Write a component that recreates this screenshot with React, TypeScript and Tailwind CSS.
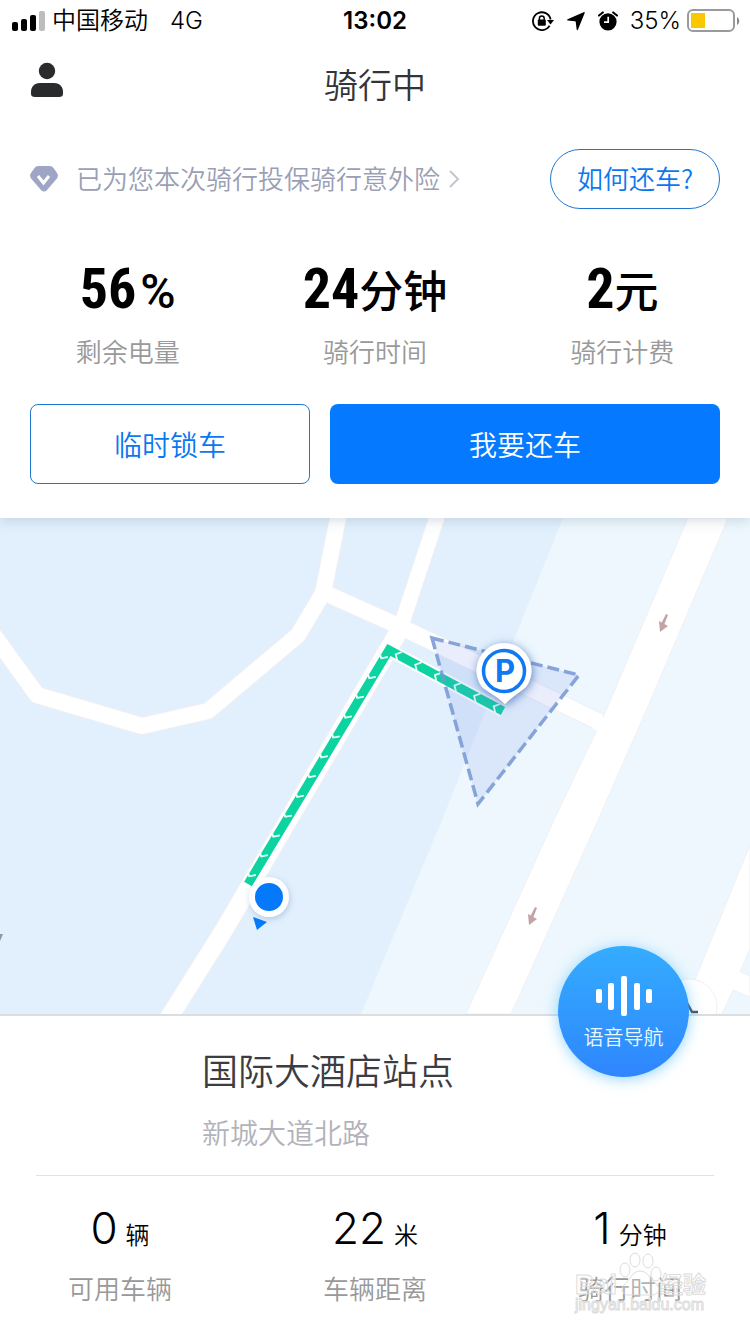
import React from "react";

const ROUTE_MARKS = [
  { from: [250, 875], to: [382, 657], count: 12, angle: 121 },
  { from: [397, 655], to: [495, 707], count: 6, angle: 208 },
];

function StatusBar() {
  return (
    <div className="grid grid-cols-3 items-center h-[42px] px-3 text-2xl text-black">
      <div className="flex items-center gap-1.5 whitespace-nowrap font-[350]">
        <svg className="w-[34px] h-5" viewBox="0 0 34 20" aria-hidden="true">
          <rect x="0" y="11" width="6" height="9" rx="2" />
          <rect x="9" y="8" width="6" height="12" rx="2" />
          <rect x="18" y="4" width="6" height="16" rx="2" />
          <rect x="27" y="0" width="6" height="20" rx="2" fill="#bdbdbd" />
        </svg>
        <span>中国移动</span>
        <span className="ml-4">4G</span>
      </div>
      <span className="text-center font-semibold">13:02</span>
      <div className="flex items-center justify-end -mr-0.5 whitespace-nowrap">
        <svg className="w-[22px] h-5 mr-3 shrink-0" viewBox="0 0 22 20" aria-hidden="true">
          <path d="M17.6 14.6A8.9 8.9 0 1 1 18.6 8.5" fill="none" stroke="#000" strokeWidth="1.8" />
          <path d="M15 9h7l-3.5 4.4z" />
          <rect x="5.8" y="8.6" width="8" height="6.2" rx="1" />
          <path d="M7.4 9V7.4a2.4 2.4 0 0 1 4.8 0V9" fill="none" stroke="#000" strokeWidth="1.5" />
        </svg>
        <svg className="w-5 h-5 mr-3 shrink-0" viewBox="0 0 20 20" aria-hidden="true">
          <path d="M17.6 1.200Q19.200 .6 18.600 2.200L12 18.500Q11.200 20 10.600 18.300L9.800 11.200Q9.700 10.400 9 10.300L1.800 9.500Q.2 9 1.600 8.200z" />
        </svg>
        <svg className="w-5 h-5 mr-3 shrink-0" viewBox="0 0 20 20" aria-hidden="true">
          <circle cx="10" cy="10.8" r="8.6" />
          <path d="M1 4.6 4.8 1.4M19 4.6 15.2 1.4" stroke="#000" strokeWidth="2" strokeLinecap="round" />
          <path d="M10.2 5.8v5.4H6" fill="none" stroke="#fff" strokeWidth="1.7" />
        </svg>
        <span className="mr-1.5 font-[350]">35%</span>
        <svg className="w-[53px] h-6 shrink-0" viewBox="0 0 53 24" aria-hidden="true">
          <rect x="1" y="1" width="46" height="21" rx="5" fill="#fff" stroke="#9a9a9a" strokeWidth="2" />
          <rect x="4" y="4" width="14" height="15" fill="#fac800" />
          <path d="M50 8c3 1.6 3 6.4 0 8z" fill="#8a8a8a" />
        </svg>
      </div>
    </div>
  );
}

function RideStat({ value, unit, label }: { value: string; unit: string; label: string }) {
  const unitClass =
    unit === "%"
      ? "ml-1 text-5xl leading-16 font-medium font-[Roboto,sans-serif]"
      : "text-[44px] font-['Noto_Sans_CJK_SC',sans-serif]";
  return (
    <div className="flex flex-col items-center">
      <p className="flex items-baseline h-16 leading-16 font-medium text-black">
        <span className="text-[56px] font-bold font-['Roboto_Condensed','Liberation_Sans_Narrow',Roboto,sans-serif]">{value}</span>
        <span className={unitClass}>{unit}</span>
      </p>
      <p className="mt-3 text-[26px] leading-10 font-[350] text-[#999999]">{label}</p>
    </div>
  );
}

function SiteStat({ value, unit, label }: { value: string; unit: string; label: string }) {
  return (
    <div className="flex flex-col items-center">
      <p className="flex items-baseline gap-2 leading-14 text-black">
        <span className="text-[44px] font-[350]">{value}</span>
        <span className="text-2xl leading-14 font-[350]">{unit}</span>
      </p>
      <p className="mt-1.5 text-[26px] leading-10 font-[350] text-[#999999]">{label}</p>
    </div>
  );
}

function RideMap() {
  return (
    <svg
      className="absolute inset-0 w-full h-full"
      viewBox="0 518 750 496"
      preserveAspectRatio="xMidYMid slice"
      role="img"
      aria-label="骑行路线"
    >
      <defs>
        <filter id="soft" x="-50%" y="-50%" width="200%" height="200%">
          <feDropShadow dx="1" dy="2" stdDeviation="5" floodColor="#3f6eb5" floodOpacity="0.8" />
        </filter>
        <filter id="faint" x="-50%" y="-50%" width="200%" height="200%">
          <feDropShadow dx="1" dy="2" stdDeviation="3" floodColor="#5b7ba8" floodOpacity="0.35" />
        </filter>
      </defs>
      <rect y="518" width="750" height="496" fill="#e2f0fd" />
      <path d="M563 518 515 637 442 820 361 1014H750V518z" fill="#edf7fd" />
      <g fill="none" strokeLinejoin="round">
        {[
          { stroke: "#efeff4", extra: 2 },
          { stroke: "#ffffff", extra: 0 },
        ].map((layer) => (
          <g key={layer.stroke} stroke={layer.stroke}>
            <path strokeWidth={16 + layer.extra} d="M-20 616 0 644 37 695 142 726 208 711 298 635 323 593 340 508" />
            <path strokeWidth={16 + layer.extra} d="M325 593 403 628 604 724" />
            <path strokeWidth={15 + layer.extra} d="M440 508 402 623" />
            <path strokeWidth={18 + layer.extra} d="M402 626 224 930 165 1024" />
          </g>
        ))}
      </g>
      <path d="M688 518 605 713 554 820 466 1014H511L598 820 645 713 728 518z" fill="#fff" stroke="#f1f1f5" />
      <path d="M600 716 612 722 604 734 592 728z" fill="#fff" />
      <path d="M750 845 695 980 684 1014H722L733 990 750 997V976L740 972 750 948z" fill="#fff" stroke="#f1f1f5" />
      <circle cx="689" cy="1007" r="28" fill="#fff" stroke="#f0f0f3" />
      <path d="M686 1001 692 1012H698" fill="none" stroke="#4b565e" strokeWidth="2.5" />
      <path d="M0 934 3 934 0 941z" fill="#8d979e" />
      {[
        [663, 623],
        [532, 916],
      ].map(([x, y]) => (
        <g key={x} transform={`translate(${x} ${y})`} fill="#c4a3a6">
          <path d="M3-9 5-8 1 2-2 1z" />
          <path d="M-4-2 5 3-3 9z" />
        </g>
      ))}
      <path d="M248 884 389 650 503 711" fill="none" stroke="#fff" strokeWidth="13" />
      <path d="M248 884 389 650 503 711" fill="none" stroke="#0cd3a0" strokeWidth="9" />
      {ROUTE_MARKS.map((run) =>
        Array.from({ length: run.count }, (_, i) => {
          const t = i / (run.count - 1);
          const x = run.from[0] + (run.to[0] - run.from[0]) * t;
          const y = run.from[1] + (run.to[1] - run.from[1]) * t;
          return (
            <path
              key={`${run.angle}-${i}`}
              transform={`translate(${x} ${y}) rotate(${run.angle})`}
              d="M-3-5 1.5 0-3 5"
              fill="none"
              stroke="#e8fff8"
              strokeWidth="1.8"
            />
          );
        }),
      )}
      <path
        d="M432 638 579 675 478 804z"
        fill="#7287e6"
        fillOpacity="0.15"
        stroke="#7596d2"
        strokeOpacity="0.85"
        strokeWidth="3.5"
        strokeDasharray="12 5"
      />
      <path
        filter="url(#soft)"
        d="M505 704C498 697 488 692 482 687A27.5 27.5 0 1 1 526 687C520 692 512 697 505 704z"
        fill="#fff"
      />
      <circle cx="504" cy="671" r="20.5" fill="#fff" stroke="#1078f0" strokeWidth="3.5" />
      <text x="505" y="682" textAnchor="middle" fontSize="31" fontWeight="700" fill="#1078f0" className="font-['Inter',sans-serif]">
        P
      </text>
      <g filter="url(#faint)">
        <circle cx="269" cy="897" r="20" fill="#fff" />
      </g>
      <circle cx="269" cy="897" r="14" fill="#0679fb" />
      <path d="M253 917 267 922 257 930z" fill="#0679fb" />
    </svg>
  );
}

function Watermark() {
  return (
    <svg className="absolute right-10 bottom-4 w-[136px] h-[66px] pointer-events-none" viewBox="0 0 136 66" aria-hidden="true">
      <g fill="#fff" fillOpacity="0.25" stroke="#dcdcdc" strokeWidth="1">
        <text x="1" y="42" fontSize="27" fontWeight="700" className="font-['Liberation_Sans',sans-serif]">Bai</text>
        <ellipse cx="51" cy="18" rx="5" ry="7" />
        <ellipse cx="61" cy="8" rx="5" ry="7" />
        <ellipse cx="74" cy="9" rx="5" ry="7" />
        <ellipse cx="82" cy="22" rx="5" ry="7" />
        <path d="M66 19c8 0 11 9 16 13s3 11-4 11H55c-8 0-9-7-4-11s7-13 15-13z" />
        <text x="86" y="41" fontSize="23" fontWeight="700">经验</text>
        <text x="1" y="58" fontSize="16" className="font-['Liberation_Sans',sans-serif]">jingyan.baidu.com</text>
      </g>
    </svg>
  );
}

export default function App() {
  return (
    <div className="flex flex-col min-h-screen bg-white font-['Inter','Noto_Sans_CJK_SC',sans-serif]">
      <div className="relative z-10 pb-[34px] bg-white shadow-[0_2px_12px_rgba(80,110,140,0.25)]">
        <StatusBar />
        <header className="grid grid-cols-3 items-center h-[88px] px-[30px]">
          <button type="button" aria-label="个人中心" className="w-[34px] h-9 mb-3">
            <svg className="w-full h-full" viewBox="0 0 34 36" fill="#2a2b2d">
              <circle cx="17" cy="9" r="8.2" />
              <path d="M10 21H24C30 21 33 25 33 30V32Q33 35 29 35H5Q1 35 1 32V30C1 25 4 21 10 21z" />
            </svg>
          </button>
          <h1 className="text-center text-[34px] leading-12 text-[#333437] font-[350]">骑行中</h1>
        </header>
        <div className="flex items-center justify-between mt-[19px] px-[30px]">
          <a href="#insurance" className="flex items-center text-[26px] font-[350] text-[#9a9fb5]">
            <svg className="w-7 h-7 mr-[18px]" viewBox="0 0 28 28" aria-hidden="true">
              <path d="M8 1H20Q22 1 23.5 3L27 8Q29 11 26.500 14L17 25Q14 28 11 25L1.500 14Q-1 11 1 8L4.500 3Q6 1 8 1z" fill="#9fa5c4" />
              <path d="M8 11 13.500 18 19 11" fill="none" stroke="#fff" strokeWidth="3" />
            </svg>
            已为您本次骑行投保骑行意外险
            <svg className="w-3 h-5 ml-2" viewBox="0 0 12 20" aria-hidden="true">
              <path d="M2 2 10 10 2 18" fill="none" stroke="#c2c4cc" strokeWidth="1.800" />
            </svg>
          </a>
          <button type="button" className="w-[170px] h-[60px] pb-1 rounded-full border border-[#1f78d0] text-[26px] font-[350] text-[#0a78f0] font-['Noto_Sans_CJK_SC',sans-serif]">
            如何还车?
          </button>
        </div>
        <div className="grid grid-cols-3 mt-12 px-1">
          <RideStat value="56" unit="%" label="剩余电量" />
          <RideStat value="24" unit="分钟" label="骑行时间" />
          <RideStat value="2" unit="元" label="骑行计费" />
        </div>
        <div className="flex gap-5 mt-[31px] px-[30px] text-[28px] font-[350]">
          <button type="button" className="w-[280px] h-20 pt-1 rounded-lg border border-[#1f78d0] text-[#0a78f0]">
            临时锁车
          </button>
          <button type="button" className="flex-1 h-20 pt-1 rounded-lg bg-[#0579ff] text-white">
            我要还车
          </button>
        </div>
      </div>

      <div className="relative flex-1 min-h-80 overflow-hidden">
        <RideMap />
      </div>

      <section className="relative border-t-2 border-[#dcdddf] bg-white pb-6">
        <button
          type="button"
          className="absolute -top-[70px] right-[61px] z-10 flex flex-col items-center w-[131px] h-[131px] pt-[30px] gap-2 rounded-full bg-linear-to-b from-[#35acff] to-[#2f86fd] text-xl font-[350] text-[#eaf8ff] shadow-[0_2px_14px_rgba(40,175,255,0.5)]"
        >
          <svg className="w-14 h-10" viewBox="0 0 56 40" fill="#fff" aria-hidden="true">
            <rect x="0" y="13" width="6" height="14" rx="2" />
            <rect x="12" y="7" width="6" height="27" rx="2" />
            <rect x="25" y="0" width="6" height="40" rx="2" />
            <rect x="38" y="7" width="6" height="27" rx="2" />
            <rect x="50" y="13" width="6" height="14" rx="2" />
          </svg>
          语音导航
        </button>
        <div className="mx-9 pt-8 pb-[19px] pl-[166px] border-b border-[#e2e2e4]">
          <h2 className="text-4xl leading-12 font-[350] text-[#3c3c43]">国际大酒店站点</h2>
          <p className="mt-4 text-[28px] leading-11 font-[350] text-[#b2b2ba]">新城大道北路</p>
        </div>
        <div className="grid grid-cols-[8fr_9fr_8fr] pt-6">
          <SiteStat value="0" unit="辆" label="可用车辆" />
          <SiteStat value="22" unit="米" label="车辆距离" />
          <SiteStat value="1" unit="分钟" label="骑行时间" />
        </div>
        <Watermark />
      </section>
    </div>
  );
}
